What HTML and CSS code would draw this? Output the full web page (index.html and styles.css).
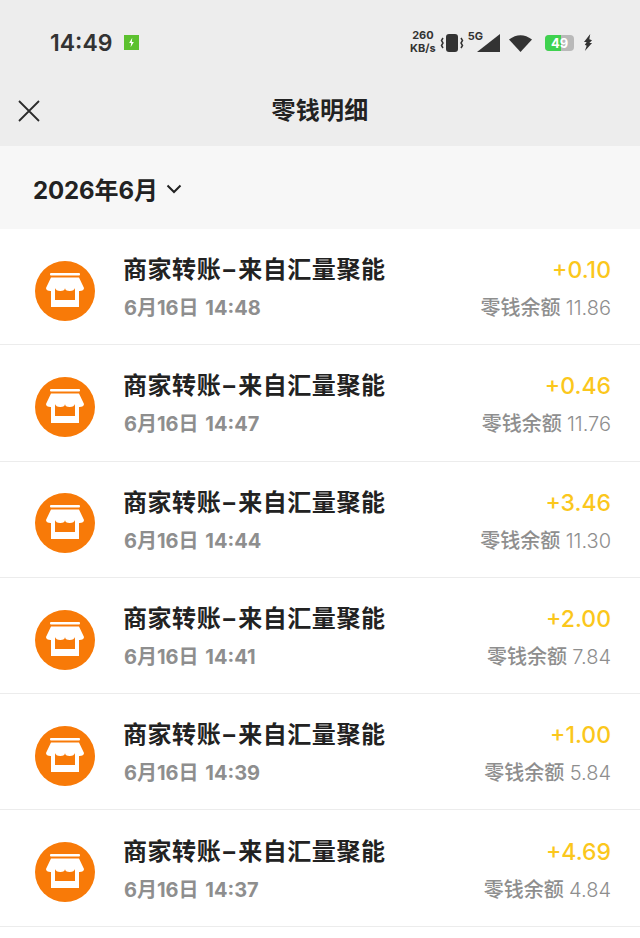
FILE: index.html
```html
<!DOCTYPE html>
<html lang="zh-CN">
<head>
    <meta charset="UTF-8">
    <meta name="viewport" content="width=device-width, initial-scale=1.0">
    <title>零钱明细</title>
    <link rel="stylesheet" href="styles.css">
</head>
<body>
    <svg class="sprite" width="0" height="0">
        <symbol id="shop" viewBox="0 0 60 60">
            <circle cx="30" cy="30" r="30" fill="#f87a08"/>
            <path d="M16 27v19h28V27h-4v12H20V27z" fill="#fff"/>
            <rect x="15" y="12" width="30" height="2.500" rx="1" fill="#fff"/>
            <path d="M16 16.500h28l5 10.500a4.750 3 0 0 1-9.500 0a4.750 3 0 0 1-9.500 0a4.750 3 0 0 1-9.500 0a4.750 3 0 0 1-9.500 0z" fill="#fff"/>
        </symbol>
    </svg>

    <div class="top">
        <div class="status">
            <span class="clock">14:49</span>
            <svg class="charge-badge" width="15" height="15" viewBox="0 0 16 16">
                <rect width="16" height="16" fill="#5cc12f"/>
                <path d="M8.800 3 5.500 8.500h2.200L7 13l3.500-5.500H8.300z" fill="#fff"/>
            </svg>
            <div class="status-right">
                <span class="speed">260<br>KB/s</span>
                <svg class="vibrate" width="24" height="20" viewBox="0 0 24 20">
                    <rect x="6" y="1" width="12" height="18" rx="3" fill="#333"/>
                    <path d="M3 5 1.500 7.500 3 10l-1.500 2.500L3 15M21 5l1.500 2.500L21 10l1.500 2.500L21 15" fill="none" stroke="#333" stroke-width="1.500"/>
                </svg>
                <span class="net">5G</span>
                <svg class="signal" width="23" height="18" viewBox="0 0 23 18">
                    <path d="M23 0v18H0z" fill="#333"/>
                </svg>
                <svg class="wifi" width="23" height="18" viewBox="0 0 23 18">
                    <path d="M0 5.500Q11.500-3 23 5.500L11.500 18z" fill="#333"/>
                </svg>
                <div class="battery"><span class="battery-fill"></span><span class="battery-num">49</span></div>
                <svg width="10" height="17" viewBox="0 0 11 19">
                    <path d="M8 0 1 9h3L2 12l2 1-2 6 8-9H7l3-3-3-1z" fill="#333"/>
                </svg>
            </div>
        </div>
        <div class="nav">
            <svg class="close" width="22" height="22" viewBox="0 0 22 22">
                <path d="M1 1l20 20M21 1 1 21" fill="none" stroke="#2b2b2b" stroke-width="1.800"/>
            </svg>
            <h1>零钱明细</h1>
        </div>
    </div>

    <div class="month">
        <span class="month-label">2026年6月</span>
        <svg class="chevron" width="16" height="10" viewBox="0 0 16 10">
            <path d="M1.500 1.500 8 8l6.500-6.500" fill="none" stroke="#222" stroke-width="2"/>
        </svg>
    </div>

    <div id="list"></div>

    <script>
        const records = [
            { time: '14:48', amount: '+0.10', balance: '11.86' },
            { time: '14:47', amount: '+0.46', balance: '11.76' },
            { time: '14:44', amount: '+3.46', balance: '11.30' },
            { time: '14:41', amount: '+2.00', balance: '7.84' },
            { time: '14:39', amount: '+1.00', balance: '5.84' },
            { time: '14:37', amount: '+4.69', balance: '4.84' }
        ];

        const list = document.getElementById('list');
        records.forEach(r => {
            const row = document.createElement('div');
            row.className = 'row';
            row.innerHTML = `
                <svg class="shop" width="60" height="60"><use href="#shop"/></svg>
                <div class="info">
                    <div class="name">商家转账<span class="dash">-</span>来自汇量聚能</div>
                    <div class="time">6月16日 ${r.time}</div>
                </div>
                <div class="money">
                    <div class="amount">${r.amount}</div>
                    <div class="balance">零钱余额 <span class="balance-num">${r.balance}</span></div>
                </div>
            `;
            list.appendChild(row);
        });
    </script>
</body>
</html>
```

FILE: styles.css
```css
* {
    box-sizing: border-box;
}
body {
    margin: 0;
    background: #fff;
    font-family: Inter, "Noto Sans CJK SC", sans-serif;
    overflow: hidden;
}
.sprite {
    display: block;
}
.top {
    background: #ededed;
    height: 146px;
}
.status {
    height: 80px;
    padding: 5px 47px 0 50px;
    display: flex;
    align-items: center;
}
.clock {
    font-size: 23px;
    font-weight: 600;
    color: #333;
}
.charge-badge {
    margin-left: 12px;
}
.status-right {
    margin-left: auto;
    display: flex;
    align-items: center;
}
.speed {
    margin-top: -2px;
    font-size: 11px;
    line-height: 13px;
    font-weight: 700;
    color: #333;
    text-align: center;
    white-space: nowrap;
}
.vibrate {
    margin: 0 2px 0 4px;
}
.net {
    font-size: 11px;
    font-weight: 700;
    color: #333;
    margin: -14px -6px 0 2px;
}
.signal {
    margin-right: 9px;
}
.wifi {
    margin-right: 13px;
}
.battery {
    width: 29px;
    height: 16px;
    margin-right: 9px;
    border-radius: 4px;
    background: #b9b9b9;
    overflow: hidden;
    position: relative;
}
.battery-fill {
    display: block;
    width: 16px;
    height: 16px;
    background: #3fd24f;
}
.battery-num {
    position: absolute;
    inset: 0;
    text-align: center;
    font-size: 13px;
    line-height: 16px;
    font-weight: 700;
    color: #fff;
}
.nav {
    height: 66px;
    padding-bottom: 4px;
    position: relative;
    display: flex;
    align-items: center;
    justify-content: center;
}
.close {
    position: absolute;
    left: 18px;
    top: 20px;
}
h1 {
    margin: 0;
    font-size: 24px;
    line-height: 32px;
    letter-spacing: .3px;
    font-weight: 700;
    color: #222;
}
.month {
    height: 83px;
    background: #f7f7f7;
    padding: 1px 0 0 33px;
    display: flex;
    align-items: center;
    gap: 8px;
    font-size: 24px;
    font-weight: 700;
    color: #222;
}
.month-label {
    letter-spacing: -.1px;
}
.chevron {
    margin-top: 2px;
}
.row {
    height: 116.3px;
    padding: 0 30px 0 35px;
    border-bottom: 1px solid #ececec;
    display: flex;
    align-items: center;
}
.shop {
    flex: none;
    margin: 8px 29px 0 0;
}
.info {
    flex: 1;
    margin-top: 3px;
}
.name {
    margin-left: -1px;
    font-size: 24px;
    line-height: 32px;
    letter-spacing: .55px;
    font-weight: 700;
    color: #222;
}
.dash {
    display: inline-block;
    width: 17px;
    text-align: center;
    transform: scaleX(1.5);
}
.time {
    margin-top: 8px;
    font-size: 20px;
    line-height: 28px;
    word-spacing: 2px;
    font-weight: 700;
    color: #8e8e8e;
}
.money {
    margin: 3px -1px 0 0;
    text-align: right;
}
.amount {
    font-size: 23px;
    line-height: 32px;
    font-weight: 500;
    color: #fbc71c;
}
.balance {
    margin-top: 8px;
    font-size: 20px;
    line-height: 28px;
    font-weight: 500;
    color: #8e8e8e;
}
.balance-num {
    font-weight: 300;
}
```
